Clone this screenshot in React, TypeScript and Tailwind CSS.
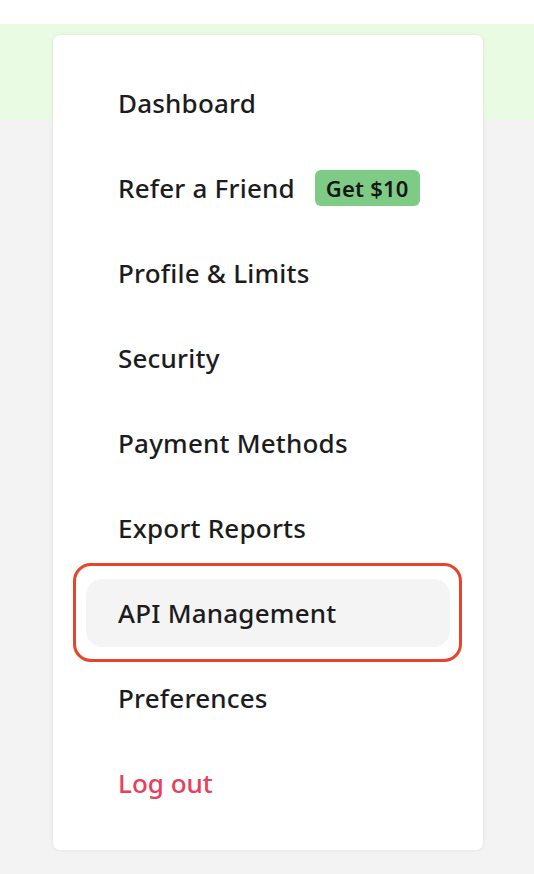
import React from "react";

const items = [
  "Dashboard",
  "Refer a Friend",
  "Profile & Limits",
  "Security",
  "Payment Methods",
  "Export Reports",
  "API Management",
  "Preferences",
];

export default function App() {
  return (
    <div
      className="relative w-[534px] h-[874px] bg-[#f3f3f3] overflow-hidden"
      style={{ fontFamily: "'Noto Sans', sans-serif" }}
    >
      <div className="h-[24px] bg-white" />
      <div className="h-[96px] bg-[#e9fbe2]" />
      <div className="absolute left-[53px] top-[35px] w-[430px] h-[815px] bg-white rounded-[7px] shadow-[0_0_4px_rgba(0,0,0,0.08)] px-[33px] pt-[25px]">
        <div className="flex flex-col">
          {items.map((label) => {
            const active = label === "API Management";
            return (
              <div key={label} className="relative h-[85px] flex items-center">
                <div
                  className={`flex items-center w-full h-[68px] px-[32px] rounded-[16px] whitespace-nowrap ${
                    active ? "bg-[#f4f4f4]" : ""
                  }`}
                >
                  <span className="shrink-0 text-[26px] font-medium text-[#1c1c20] leading-none tracking-[0.2px]">
                    {label}
                  </span>
                  {label === "Refer a Friend" && (
                    <span className="shrink-0 ml-[20px] h-[36px] px-[11px] flex items-center rounded-[6px] bg-[#7ecb85] text-[22px] font-semibold text-[#161616] leading-none tracking-[0.2px]">
                      Get $10
                    </span>
                  )}
                </div>
                {active && (
                  <div className="absolute left-[-13px] right-[-12px] top-[-7px] bottom-[-7px] border-[3px] border-[#e8442b] rounded-[18px]" />
                )}
              </div>
            );
          })}
          <div className="h-[85px] flex items-center px-[32px]">
            <span className="text-[26px] font-medium text-[#e8405a] leading-none">Log out</span>
          </div>
        </div>
      </div>
    </div>
  );
}
